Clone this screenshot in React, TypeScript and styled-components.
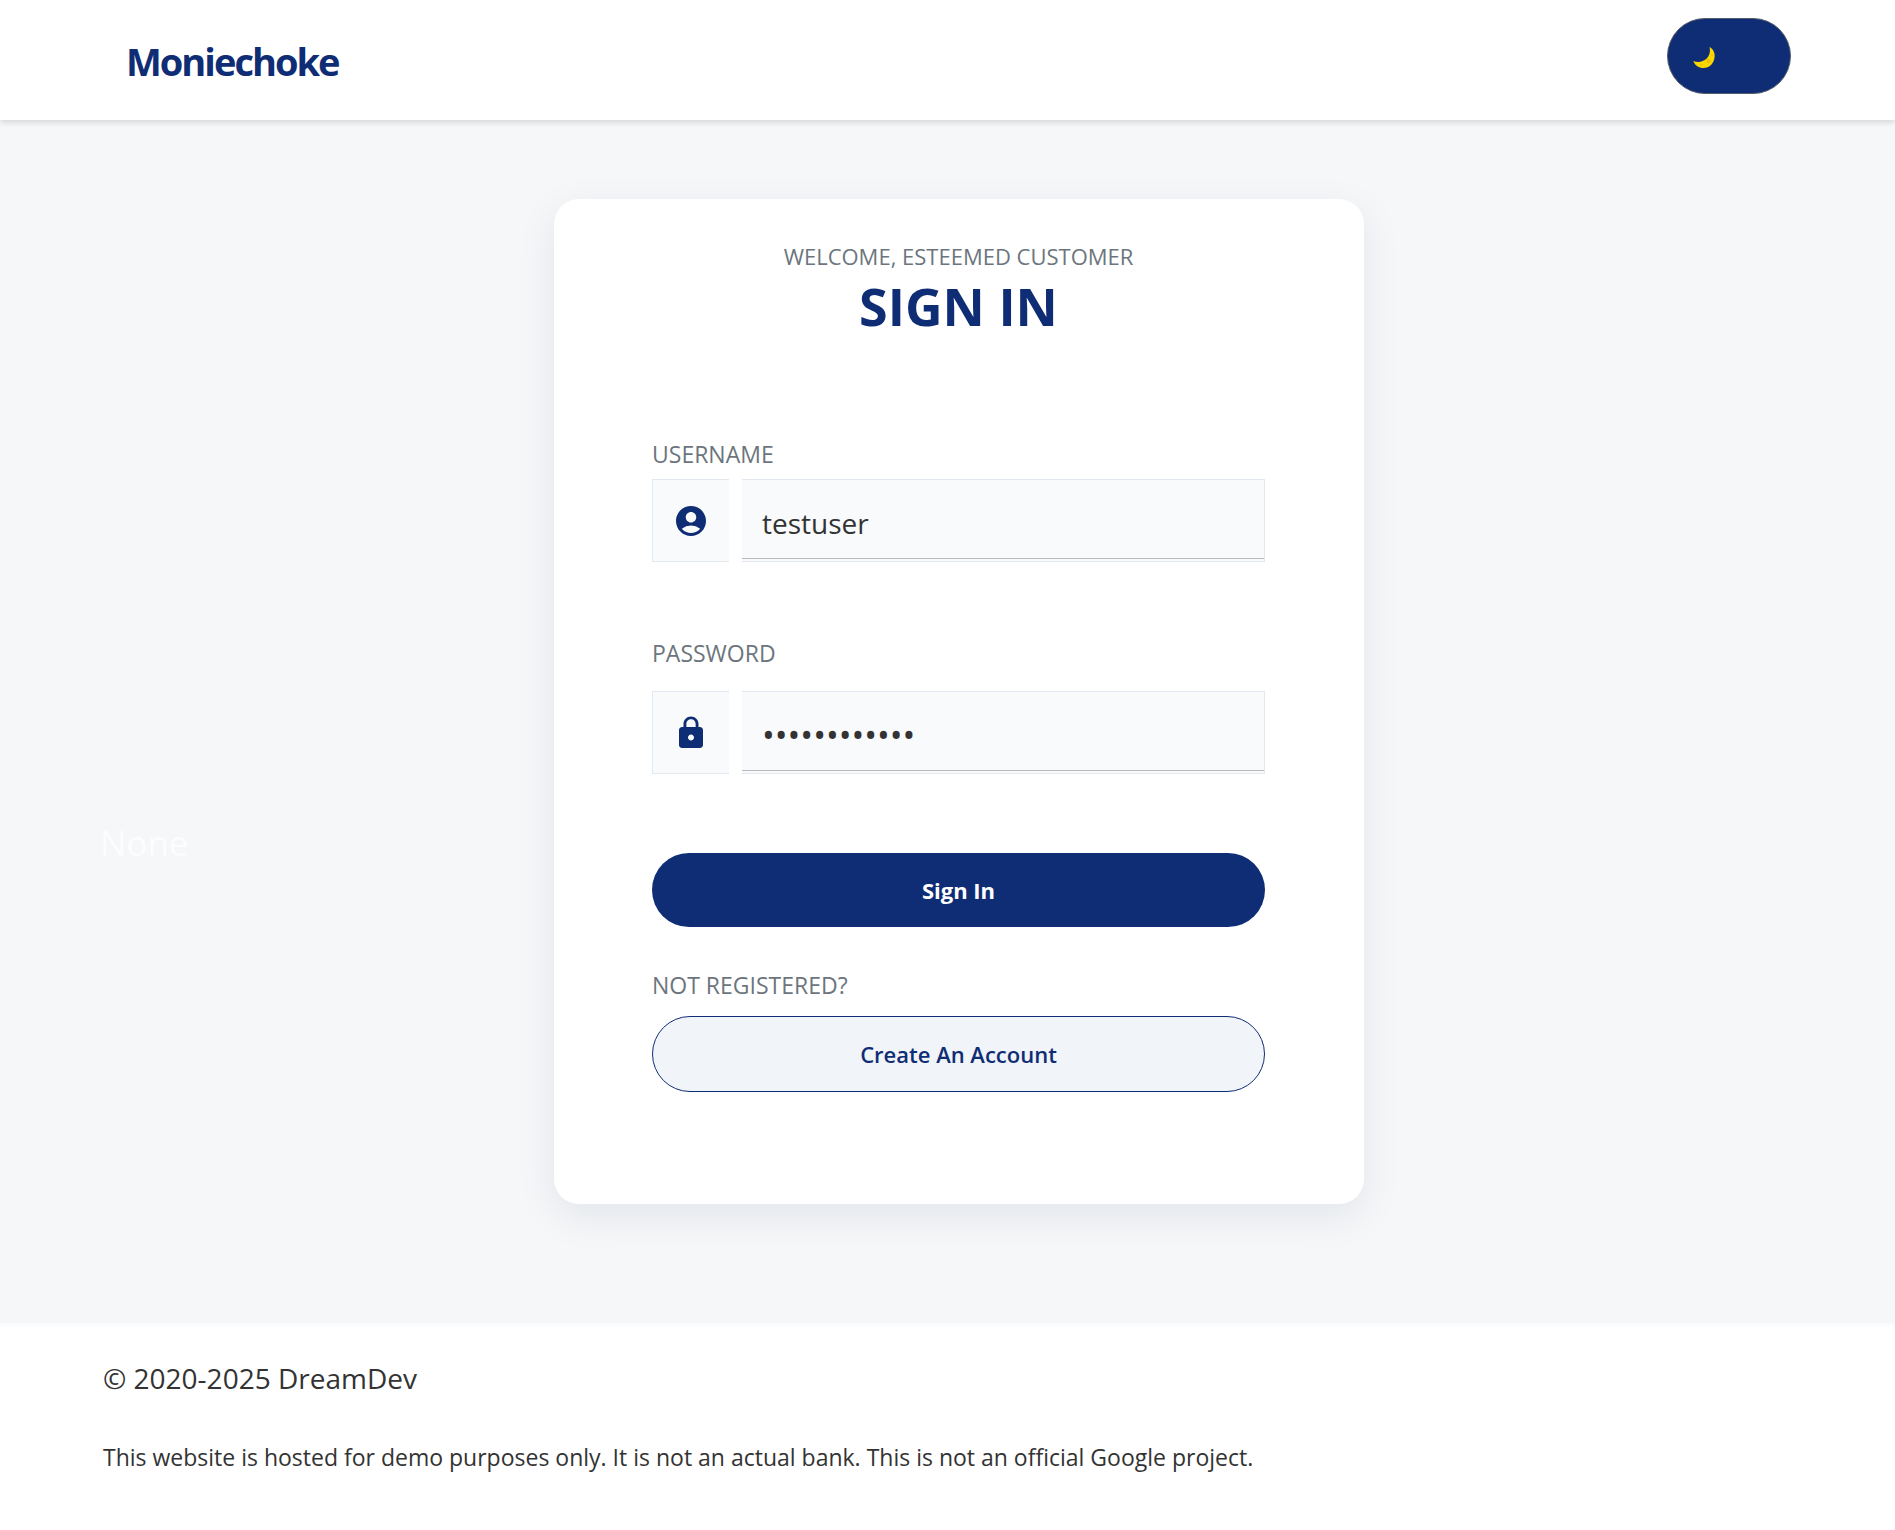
import React, { useState } from "react";
import styled, { createGlobalStyle } from "styled-components";
import { MdAccountCircle, MdLock } from "react-icons/md";

const navy = "#0f2d75";
const ink = "#333333";
const muted = "#6c757d";
const line = "#e2e8f0";
const field = "#f9fafc";

const GlobalStyle = createGlobalStyle`
  *, *::before, *::after { box-sizing: border-box; }
  body {
    margin: 0;
    background: #ffffff;
    color: ${ink};
    font-family: "Segoe UI", "Open Sans", "Noto Sans", sans-serif;
    font-size: 23px;
  }
  button, input { font-family: inherit; }
`;

const Page = styled.div`
  min-height: 100vh;
  display: flex;
  flex-direction: column;
`;

const Header = styled.header`
  position: relative;
  display: flex;
  align-items: flex-start;
  justify-content: space-between;
  padding: 18px 104px 26px 126px;
  background: #ffffff;
  box-shadow: 0 2px 6px rgba(0, 0, 0, 0.15);
`;

const Brand = styled.a`
  padding-top: 15px;
  color: ${navy};
  font-size: 38px;
  font-weight: 700;
  line-height: 56px;
  letter-spacing: -2px;
  text-decoration: none;
`;

const ThemeToggle = styled.button`
  display: flex;
  align-items: center;
  width: 124px;
  height: 76px;
  padding: 4px 0 0 24px;
  border: 1px solid #555c6b;
  border-radius: 38px;
  background: ${navy};
  cursor: pointer;
`;

const Main = styled.main`
  display: grid;
  grid-template-columns: 1fr minmax(0, 810px) 1fr;
  align-items: start;
  padding: 79px 77px 119px 100px;
  background: #f5f7f9;
`;

const Notice = styled.p`
  margin: 0;
  padding-top: 620px;
  color: #fdfdfe;
  font-size: 35px;
  line-height: 48px;
`;

const Card = styled.section`
  padding: 41px 99px 112px 98px;
  border-radius: 25px;
  background: #ffffff;
  box-shadow: 0 12px 40px rgba(15, 25, 60, 0.08);
`;

const CardHead = styled.div`
  margin-bottom: 98px;
  text-align: center;
`;

const Welcome = styled.p`
  margin: 0;
  color: ${muted};
  font-size: 22px;
  line-height: 32px;
`;

const Title = styled.h1`
  margin: 0;
  color: ${navy};
  font-size: 52px;
  font-weight: 700;
  line-height: 68px;
`;

const Form = styled.form`
  display: flex;
  flex-direction: column;
`;

const Label = styled.label`
  color: ${muted};
  font-size: 23px;
  line-height: 32px;
`;

const Field = styled.div<{ $top: number; $bottom: number }>`
  display: flex;
  gap: 13px;
  height: 83px;
  margin: ${(p) => p.$top}px 0 ${(p) => p.$bottom}px;
`;

const IconBox = styled.span`
  display: grid;
  place-items: center;
  flex: 0 0 77px;
  border: 1px solid ${line};
  border-right: 0;
  background: ${field};
  color: ${navy};
  font-size: 36px;

  svg { display: block; }
`;

const InputBox = styled.span`
  display: flex;
  flex: 1;
  padding-bottom: 2px;
  border: 1px solid ${line};
  border-left: 0;
  background: ${field};
`;

const Input = styled.input`
  width: 100%;
  padding: 8px 20px 0;
  border: 0;
  border-bottom: 1px solid #b9babc;
  border-radius: 0;
  outline: 0;
  background: transparent;
  color: ${ink};
  font-size: 28px;

  &[type="password"] { font-size: 34px; }
`;

const Pill = styled.button<{ $outline?: boolean }>`
  height: ${(p) => (p.$outline ? 76 : 74)}px;
  padding: 0 24px;
  border: ${(p) => (p.$outline ? `1px solid ${navy}` : "0")};
  border-radius: 38px;
  background: ${(p) => (p.$outline ? "#f1f4f9" : navy)};
  color: ${(p) => (p.$outline ? navy : "#ffffff")};
  font-size: 22px;
  font-weight: ${(p) => (p.$outline ? 600 : 700)};
  cursor: pointer;
`;

const Prompt = styled.p`
  margin: 42px 0 15px;
  color: ${muted};
  font-size: 23px;
  line-height: 32px;
`;

const Footer = styled.footer`
  flex: 1;
  padding: 32px 103px;
  border-top: 3px solid #fafbfc;
  background: #ffffff;
`;

const Copyright = styled.p`
  margin: 0 0 43px;
  font-size: 28px;
  line-height: 40px;
`;

const Disclaimer = styled.p`
  margin: 0;
  font-size: 23px;
  line-height: 32px;
`;

function Moon() {
  return (
    <svg width="24" height="24" viewBox="0 0 24 24" aria-hidden="true">
      <path d="M17.6 1C21 3 23 6.500 22.600 11C22 17.500 17.500 22 11.500 22C7 22 3 19.500 1.200 15C6 16.800 11 16 14.500 12.800C17.600 9.800 18.600 5.500 17.600 1Z" fill="#fbd700" />
      <circle cx="16.500" cy="15" r="2.200" fill="#f2c200" />
      <circle cx="9.500" cy="18.800" r="1.100" fill="#f2c200" />
      <circle cx="20" cy="9" r="1" fill="#f2c200" />
    </svg>
  );
}

export default function App() {
  const [username, setUsername] = useState("testuser");
  const [password, setPassword] = useState("testpassword");

  return (
    <>
      <GlobalStyle />
      <Page>
        <Header>
          <Brand href="#">Moniechoke</Brand>
          <ThemeToggle type="button" aria-label="Toggle dark mode">
            <Moon />
          </ThemeToggle>
        </Header>
        <Main>
          <Notice>None</Notice>
          <Card>
            <CardHead>
              <Welcome>WELCOME, ESTEEMED CUSTOMER</Welcome>
              <Title>SIGN IN</Title>
            </CardHead>
            <Form onSubmit={(e) => e.preventDefault()}>
              <Label htmlFor="username">USERNAME</Label>
              <Field $top={9} $bottom={75}>
                <IconBox><MdAccountCircle /></IconBox>
                <InputBox>
                  <Input id="username" type="text" value={username} onChange={(e) => setUsername(e.target.value)} />
                </InputBox>
              </Field>
              <Label htmlFor="password">PASSWORD</Label>
              <Field $top={22} $bottom={79}>
                <IconBox><MdLock /></IconBox>
                <InputBox>
                  <Input id="password" type="password" value={password} onChange={(e) => setPassword(e.target.value)} />
                </InputBox>
              </Field>
              <Pill type="submit">Sign In</Pill>
              <Prompt>NOT REGISTERED?</Prompt>
              <Pill type="button" $outline>Create An Account</Pill>
            </Form>
          </Card>
        </Main>
        <Footer>
          <Copyright>© 2020-2025 DreamDev</Copyright>
          <Disclaimer>
            This website is hosted for demo purposes only. It is not an actual bank. This is not an official Google project.
          </Disclaimer>
        </Footer>
      </Page>
    </>
  );
}
